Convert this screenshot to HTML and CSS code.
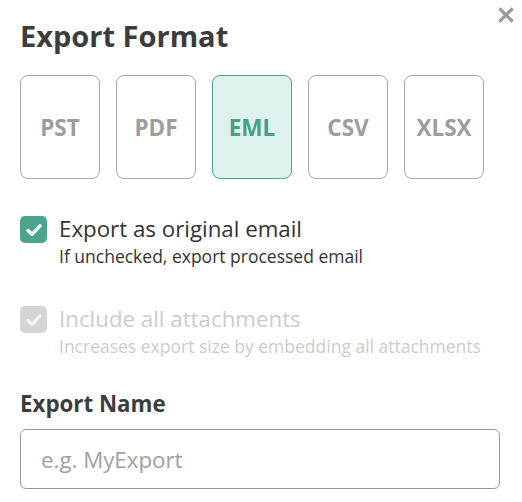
FILE: index.html
```html
<!DOCTYPE html>
<html lang="en">
<head>
<meta charset="UTF-8" />
<title>Export</title>
<link rel="stylesheet" href="styles.css">
</head>
<body>

<div class="dialog">
  <button class="close" aria-label="Close">
    <svg width="16" height="16" viewBox="0 0 16 16"><path d="M2.5 2.5 L13.5 13.5 M13.5 2.5 L2.5 13.5" stroke="#9a9a9a" stroke-width="3.2" stroke-linecap="square"/></svg>
  </button>

  <h1 class="title">Export Format</h1>

  <div class="formats">
    <div class="format">PST</div>
    <div class="format">PDF</div>
    <div class="format selected">EML</div>
    <div class="format">CSV</div>
    <div class="format">XLSX</div>
  </div>

  <div class="option">
    <span class="check">
      <svg width="20" height="20" viewBox="0 0 20 20"><path d="M4 10.5 L8 14.3 L16 5.8" fill="none" stroke="#fff" stroke-width="3.4" stroke-linecap="round" stroke-linejoin="round"/></svg>
    </span>
    <div class="option-text">
      <div class="option-label">Export as original email</div>
      <div class="option-hint">If unchecked, export processed email</div>
    </div>
  </div>

  <div class="option disabled">
    <span class="check">
      <svg width="20" height="20" viewBox="0 0 20 20"><path d="M4 10.5 L8 14.3 L16 5.8" fill="none" stroke="#f2f2f2" stroke-width="3.4" stroke-linecap="round" stroke-linejoin="round"/></svg>
    </span>
    <div class="option-text">
      <div class="option-label">Include all attachments</div>
      <div class="option-hint">Increases export size by embedding all attachments</div>
    </div>
  </div>

  <h2 class="field-label">Export Name</h2>
  <input class="name-input" type="text" placeholder="e.g. MyExport">
</div>

</body>
</html>
```

FILE: styles.css
```css
html, body {
  margin: 0;
  padding: 0;
  background: #fff;
  font-family: 'Open Sans', sans-serif;
  color: #333;
}
.dialog {
  position: relative;
  padding: 16px 22px 0 20px;
}
.close {
  position: absolute;
  top: 7px;
  right: 8px;
  border: none;
  background: none;
  padding: 0;
  cursor: pointer;
}
.title {
  margin: 0;
  font-size: 29px;
  font-weight: 700;
  line-height: 40px;
  color: #3a3d3c;
}
.formats {
  display: flex;
  gap: 16px;
  margin-top: 19px;
}
.format {
  width: 78px;
  height: 102px;
  border: 1px solid #aaa;
  border-radius: 8px;
  display: flex;
  align-items: center;
  justify-content: center;
  font-size: 22.5px;
  font-weight: 700;
  color: #9d9d9d;
}
.format.selected {
  background: #dff1ee;
  border-color: #4aa88c;
  color: #4a9e85;
}
.option {
  display: flex;
  align-items: flex-start;
  gap: 12px;
  margin-top: 35px;
}
.option + .option {
  margin-top: 36px;
}
.check {
  flex: none;
  width: 27px;
  height: 27px;
  margin-top: 2px;
  border-radius: 5px;
  background: #4ba58c;
  display: flex;
  align-items: center;
  justify-content: center;
}
.option-label {
  font-size: 22.3px;
  line-height: 30px;
  color: #333;
}
.option-hint {
  font-size: 17.5px;
  line-height: 24px;
  color: #333;
}
.option.disabled .check {
  background: #d4d4d4;
}
.option.disabled .option-label,
.option.disabled .option-hint {
  color: #cccccc;
}
.field-label {
  margin: 31px 0 0;
  font-size: 22.3px;
  font-weight: 700;
  line-height: 30px;
  color: #3a3d3c;
}
.name-input {
  display: block;
  box-sizing: border-box;
  width: 480px;
  height: 60px;
  margin-top: 10px;
  padding: 0 20px;
  border: 1px solid #999;
  border-radius: 6px;
  font-family: 'Open Sans', sans-serif;
  font-size: 22.3px;
  color: #333;
  outline: none;
}
.name-input::placeholder {
  color: #a0a0a0;
}
```
